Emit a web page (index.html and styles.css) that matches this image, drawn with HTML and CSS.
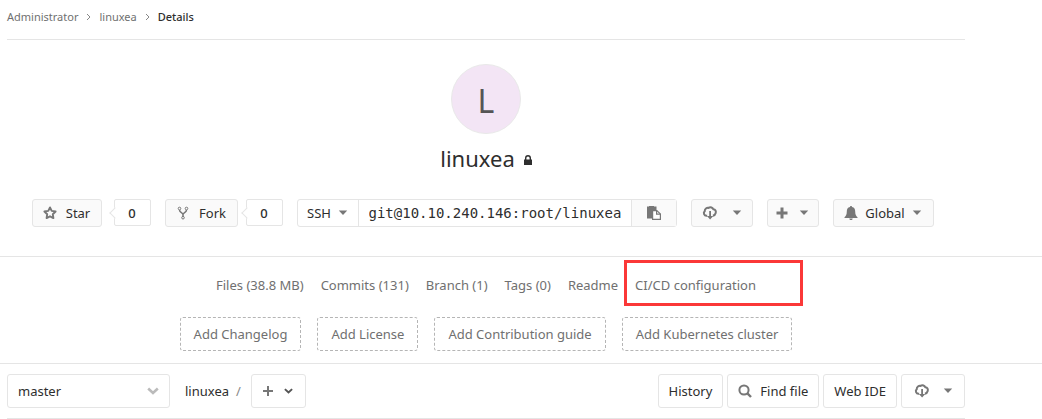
FILE: index.html
```
<!DOCTYPE html>
<html lang="en">
<head>
<meta charset="utf-8">
<title>linuxea · Details</title>
<link rel="stylesheet" href="styles.css">
</head>
<body>
<svg class="defs" aria-hidden="true">
  <symbol id="i-cloud" viewBox="0 0 16 16"><path fill="none" stroke="currentColor" stroke-width="2" d="M5.200 10.800H4.600A2.600 2.600 0 0 1 2.700 6.300C2.700 3.800 4.800 2.600 6.500 2.900 8.500 1.600 10.800 2.600 11.300 4.200 13.500 4.500 14.200 6.300 13.700 8 13.300 9.600 12.200 10.500 10.900 10.800"/><path fill="currentColor" d="M7.200 6h1.800v5h2.300L8.100 14.500 4.900 11h2.300z"/></symbol>
  <symbol id="i-caret" viewBox="0 0 10 6"><path fill="currentColor" d="M.8.500h8.400L5 5z"/></symbol>
  <symbol id="i-angle" viewBox="0 0 12 8"><path fill="none" stroke="currentColor" stroke-width="2.600" d="M1.200 1.500 6 6l4.800-4.500"/></symbol>
  <symbol id="i-plus" viewBox="0 0 12 12"><path fill="currentColor" d="M4.500.500h3v4h4v3h-4v4h-3v-4h-4v-3h4z"/></symbol>
  <symbol id="i-plus-thin" viewBox="0 0 10 10"><path fill="currentColor" d="M4 0h2v4h4v2H6v4H4V6H0V4h4z"/></symbol>
</svg>
<div class="page">
  <nav class="crumbs" aria-label="Breadcrumb">
    <a href="#">Administrator</a>
    <svg class="sep" viewBox="0 0 5 8"><path d="M1 1l3 3-3 3"/></svg>
    <a href="#">linuxea</a>
    <svg class="sep" viewBox="0 0 5 8"><path d="M1 1l3 3-3 3"/></svg>
    <a class="current" href="#">Details</a>
  </nav>

  <header class="project">
    <div class="avatar">L</div>
    <h1>linuxea
      <svg class="lock" viewBox="0 0 8 10"><path fill="currentColor" d="M0 4.500h8V10H0z"/><path fill="none" stroke="currentColor" stroke-width="1.400" d="M1.700 5V3a2.300 2.300 0 0 1 4.600 0v2"/></svg>
    </h1>
    <div class="actions">
      <div class="counted star">
        <button class="btn" type="button"><svg class="i14" viewBox="0 0 14 14"><path fill="none" stroke="currentColor" stroke-width="1.900" stroke-linejoin="round" d="M7 1.400l1.700 3.500 3.900.600-2.800 2.700.600 3.900L7 10.300l-3.400 1.800.600-3.900L1.400 5.500l3.900-.600z"/></svg>Star</button>
        <a class="count" href="#">0</a>
      </div>
      <div class="counted fork">
        <button class="btn" type="button"><svg class="i14" viewBox="0 0 14 14"><g fill="none" stroke="currentColor"><circle cx="3.500" cy="2.500" r="1.300"/><circle cx="10.500" cy="2.500" r="1.300"/><circle cx="7" cy="11.700" r="1.300"/><path stroke-width="1.500" d="M3.500 4c0 2.500 3.500 2.500 3.500 4.500 0-2 3.500-2 3.500-4.500M7 7.500v3"/></g></svg>Fork</button>
        <a class="count" href="#">0</a>
      </div>
      <div class="clone">
        <button class="proto" type="button">SSH<svg class="caret"><use href="#i-caret"/></svg></button>
        <input aria-label="Project clone URL" type="text" readonly value="git@10.10.240.146:root/linuxea">
        <button class="copy" type="button" aria-label="Copy URL"><svg class="i14" viewBox="0 0 14 14"><path fill="currentColor" d="M0 .500h2V0h5v.500h2.500V4H5v8.500H0z"/><path fill="#fff" stroke="currentColor" stroke-width="1.200" d="M5.600 4.600h4.200l3.600 3.300v5.500H5.600z"/><path fill="none" stroke="currentColor" stroke-width="1.200" d="M9.600 4.600v3.600h3.800"/></svg></button>
      </div>
      <button class="btn download" type="button" aria-label="Download"><svg class="i16"><use href="#i-cloud"/></svg><svg class="caret"><use href="#i-caret"/></svg></button>
      <button class="btn add" type="button" aria-label="Add"><svg class="i12"><use href="#i-plus"/></svg><svg class="caret"><use href="#i-caret"/></svg></button>
      <button class="btn notify" type="button"><svg class="i14" viewBox="0 0 14 14"><path fill="currentColor" d="M7 0c.8 0 1 .5 1 1 2.400.500 3.200 2.300 3.200 4.500 0 3 .8 4.700 2.300 5.800v.700H.5v-.700C2 10.200 2.800 8.500 2.800 5.500 2.800 3.300 3.600 1.500 6 1c0-.5.200-1 1-1zM5.300 12.500h3.400C8.500 13.500 8 14 7 14s-1.500-.5-1.700-1.500z"/></svg>Global<svg class="caret"><use href="#i-caret"/></svg></button>
    </div>
  </header>
</div>

<section class="stats">
  <div class="inner">
    <ul class="links">
      <li><a href="#">Files (38.8 MB)</a></li>
      <li><a href="#">Commits (131)</a></li>
      <li><a href="#">Branch (1)</a></li>
      <li><a href="#">Tags (0)</a></li>
      <li><a href="#">Readme</a></li>
      <li class="marked"><a href="#">CI/CD configuration</a></li>
    </ul>
    <ul class="missing">
      <li><a href="#">Add Changelog</a></li>
      <li><a href="#">Add License</a></li>
      <li><a href="#">Add Contribution guide</a></li>
      <li><a href="#">Add Kubernetes cluster</a></li>
    </ul>
  </div>
</section>

<div class="page tree">
  <button class="box ref" type="button">master<svg class="angle"><use href="#i-angle"/></svg></button>
  <div class="path"><a href="#">linuxea</a><span>/</span></div>
  <button class="box new" type="button" aria-label="Add to tree"><svg class="i10"><use href="#i-plus-thin"/></svg><svg class="angle small" viewBox="0 0 12 8"><use href="#i-angle"/></svg></button>
  <div class="tools">
    <a class="box" href="#">History</a>
    <a class="box" href="#"><svg class="i14" viewBox="0 0 14 14"><g fill="none" stroke="currentColor" stroke-width="2"><circle cx="6" cy="6" r="4.600"/><path stroke-width="2.400" d="M9.400 9.400l3.600 3.600"/></g></svg>Find file</a>
    <a class="box" href="#">Web IDE</a>
    <button class="box archive" type="button" aria-label="Download source"><svg class="i16"><use href="#i-cloud"/></svg><svg class="caret"><use href="#i-caret"/></svg></button>
  </div>
</div>
</body>
</html>
```
FILE: styles.css
```
* { box-sizing: border-box; }
body {
  margin: 0;
  background: #fff;
  color: #2e2e2e;
  font: 13px/20px "Noto Sans", sans-serif;
}
a { color: inherit; text-decoration: none; }
button, input { font: inherit; color: inherit; margin: 0; }
button { cursor: pointer; }
ul { list-style: none; margin: 0; padding: 0; }
svg { flex: none; color: #777; }
.defs { display: none; }
.page, .inner { margin: 0 77px 0 7px; }

.crumbs {
  display: flex;
  align-items: center;
  gap: 8px;
  height: 40px;
  padding-bottom: 6px;
  border-bottom: 1px solid #e5e5e5;
  color: #707070;
  font-size: 11px;
}
.crumbs .current { color: #2e2e2e; font-weight: 500; }
.sep { width: 5px; height: 8px; fill: none; stroke: #888; }

.project {
  display: flex;
  flex-direction: column;
  align-items: center;
  padding: 24px 0 29px;
}
.avatar {
  width: 70px;
  height: 70px;
  border: 1px solid #e9e9e9;
  border-radius: 50%;
  background: #f3e5f5;
  color: #555;
  font-size: 32px;
  line-height: 72px;
  text-align: center;
}
h1 {
  display: flex;
  align-items: center;
  gap: 9px;
  margin: 8px 0 25px;
  font-size: 22px;
  font-weight: 400;
  line-height: 32px;
}
.lock { width: 8px; height: 10px; margin-top: 4px; color: #2e2e2e; }
.actions { display: flex; gap: 14px; margin-right: 7px; }
.btn {
  display: flex;
  align-items: center;
  justify-content: center;
  height: 28px;
  padding: 0;
  border: 1px solid #e5e5e5;
  border-radius: 3px;
  background: #fafafa;
}
.i10 { width: 10px; height: 10px; }
.i12 { width: 12px; height: 12px; }
.i14 { width: 14px; height: 14px; }
.i16 { width: 16px; height: 16px; }
.caret { width: 10px; height: 6px; }
.counted { display: flex; }
.star { gap: 12px; }
.fork { gap: 8px; }
.star .btn { width: 70px; gap: 9px; }
.fork .btn { width: 73px; gap: 9px; }
.count {
  position: relative;
  width: 37px;
  height: 27px;
  border: 1px solid #e5e5e5;
  border-radius: 2px;
  line-height: 26px;
  text-align: center;
  font-weight: 500;
}
.count::before {
  content: "";
  position: absolute;
  left: -4px;
  top: 9px;
  width: 7px;
  height: 7px;
  border: solid #e5e5e5;
  border-width: 0 0 1px 1px;
  background: #fff;
  transform: rotate(45deg);
}
.clone {
  display: flex;
  height: 28px;
  border: 1px solid #e5e5e5;
  border-radius: 3px;
}
.clone button {
  display: flex;
  align-items: center;
  justify-content: center;
  padding: 0;
  border: 0;
  background: none;
}
.clone .proto { width: 60px; gap: 7px; }
.clone input {
  width: 274px;
  min-width: 0;
  padding: 0 10px;
  border: solid #e5e5e5;
  border-width: 0 1px;
  outline: 0;
  background: #fff;
  font: 14px/20px "DejaVu Sans Mono", monospace;
}
.clone .copy { width: 44px; background: #fafafa; }
.download { width: 62px; gap: 14px; }
.add { width: 52px; gap: 11px; }
.notify { width: 101px; gap: 7px; }

.stats {
  border: solid #e5e5e5;
  border-width: 1px 0;
  color: #707070;
}
.links, .missing { display: flex; justify-content: center; }
.links { gap: 17px; padding: 18px 0 22px; }
.missing { gap: 16px; padding-bottom: 12px; }
.missing a {
  display: block;
  padding: 6px 13px;
  border: 1px dashed #b5b5b5;
  border-radius: 3px;
}
.marked { position: relative; }
.marked::after {
  content: "";
  position: absolute;
  inset: -15px -47px -11px -11px;
  border: 3px solid #fb3838;
  pointer-events: none;
}

.tree {
  display: flex;
  align-items: center;
  padding: 10px 0;
  border-bottom: 1px solid #e5e5e5;
}
.box {
  display: flex;
  align-items: center;
  gap: 8px;
  height: 34px;
  padding: 0 10px;
  border: 1px solid #e5e5e5;
  border-radius: 3px;
  background: #fff;
}
.ref { width: 163px; justify-content: space-between; }
.angle { width: 12px; height: 8px; color: #bbb; }
.angle.small { width: 9px; height: 6px; color: #555; }
.path { display: flex; gap: 7px; padding: 0 10px 0 15px; }
.path span { color: #888; }
.new { width: 55px; gap: 11px; justify-content: center; }
.tools { display: flex; gap: 4px; margin-left: auto; }
.archive { width: 64px; gap: 13px; justify-content: center; }
```
